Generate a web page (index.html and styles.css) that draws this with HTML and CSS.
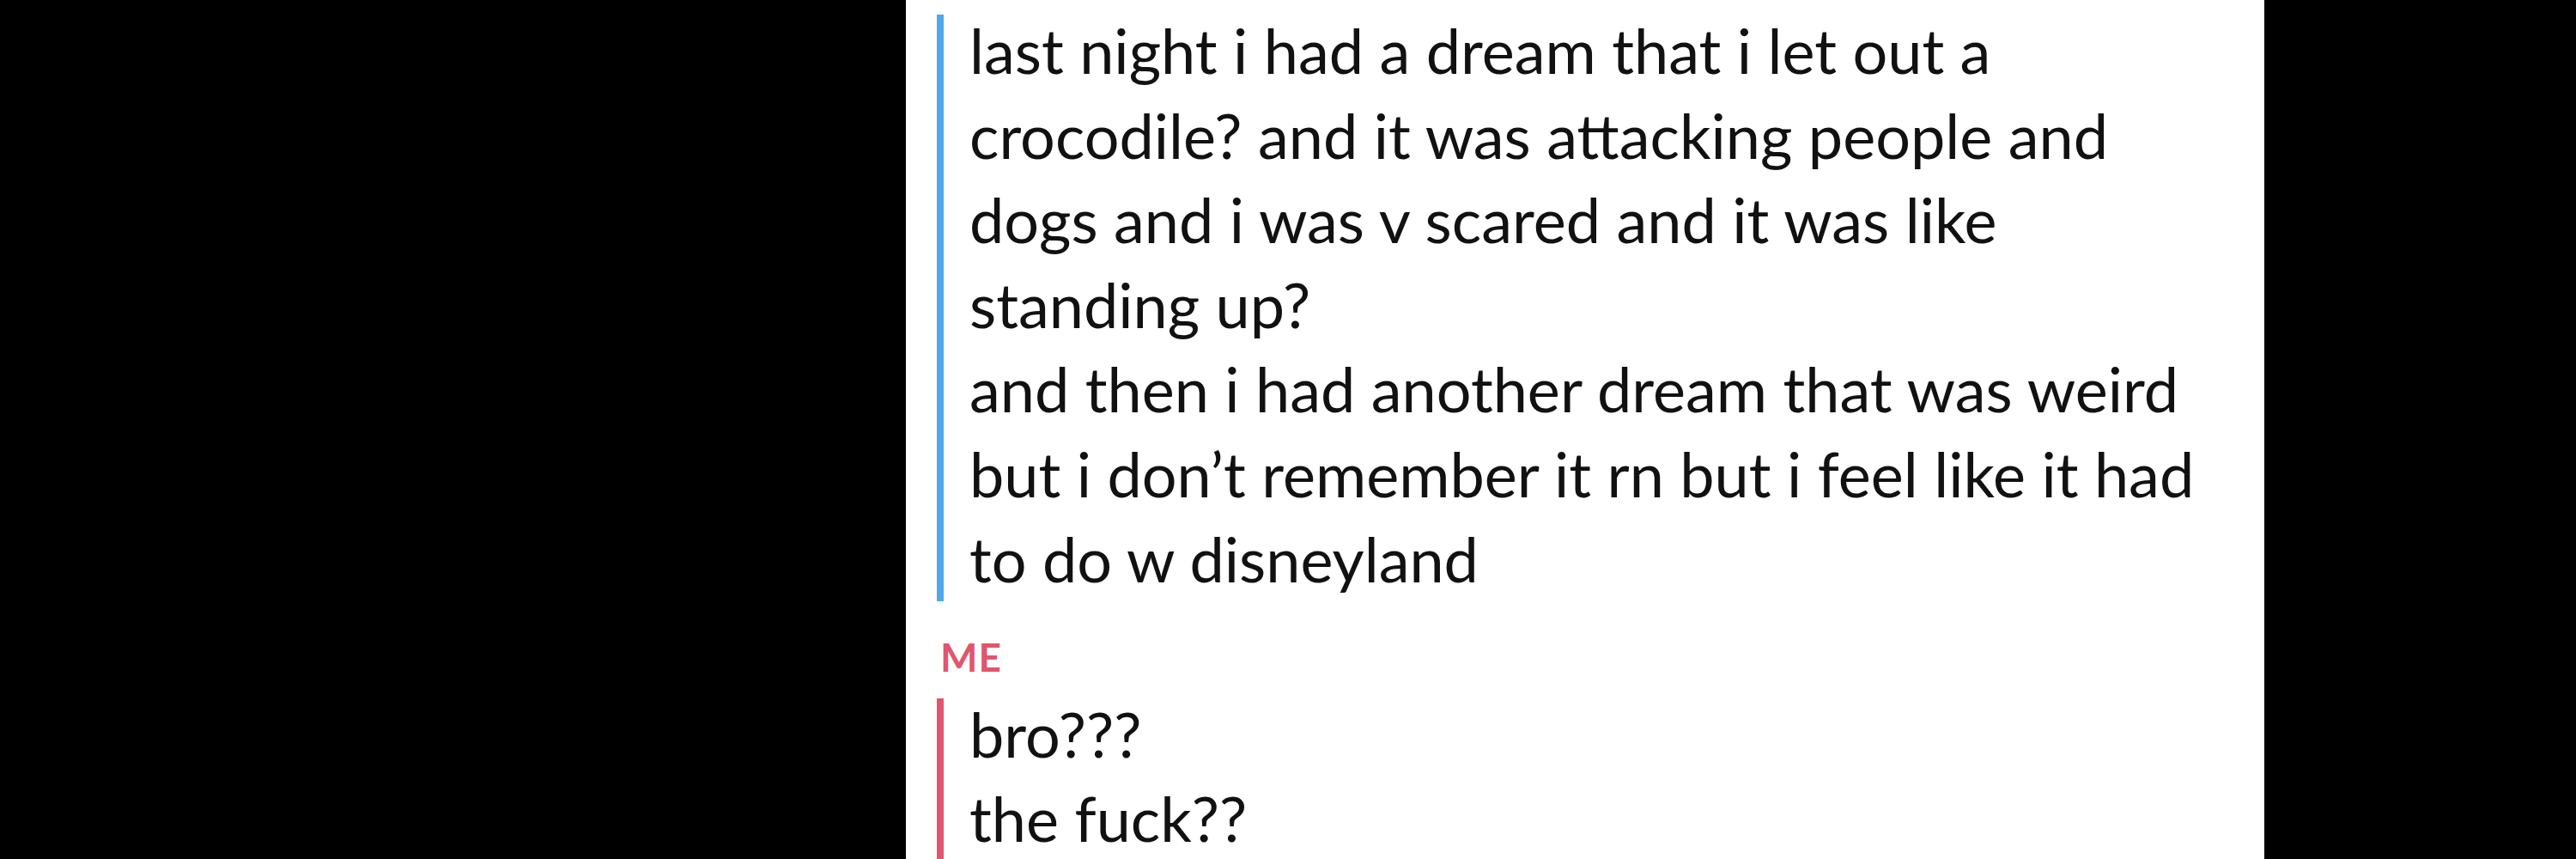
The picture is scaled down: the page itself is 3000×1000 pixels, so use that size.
FILE: index.html
```html
<!DOCTYPE html>
<html lang="en">
<head>
    <meta charset="UTF-8">
    <title>chat</title>
    <link rel="stylesheet" href="styles.css">
</head>
<body>
    <div class="screen">
        <!-- friend's messages -->
        <div class="msg friend">
            <div class="line">last night i had a dream that i let out a</div>
            <div class="line">crocodile? and it was attacking people and</div>
            <div class="line">dogs and i was v scared and it was like</div>
            <div class="line">standing up?</div>
            <div class="line">and then i had another dream that was weird</div>
            <div class="line">but i don’t remember it rn but i feel like it had</div>
            <div class="line">to do w disneyland</div>
        </div>

        <div class="sender me">ME</div>

        <!-- my messages -->
        <div class="msg mine">
            <div class="line">bro???</div>
            <div class="line">the fuck??</div>
        </div>
    </div>
</body>
</html>
```

FILE: styles.css
```css
html, body {
    margin: 0;
    height: 100%;
    background-color: #000;
    overflow: hidden;
}
.screen {
    width: 1582px;
    height: 100%;
    margin-left: 1055px;
    background-color: #fff;
    padding: 17px 0 0 36px;
    box-sizing: border-box;
    font-family: Lato, "Liberation Sans", sans-serif;
    color: #111;
}
.msg {
    display: flex;
    flex-direction: column;
    gap: 16.6px;
    border-left: 8px solid #4ea9e6;
    padding: 0 0 9px 30px;
}
.msg.mine {
    border-left-color: #e0566e;
    padding-bottom: 40px;
}
.line {
    font-size: 72px;
    line-height: 82px;
    white-space: nowrap;
}
.sender {
    font-size: 46px;
    font-weight: 700;
    letter-spacing: 1px;
    line-height: 46px;
    margin: 42px 0 25px 4px;
}
.sender.me {
    color: #e0566e;
}
```
